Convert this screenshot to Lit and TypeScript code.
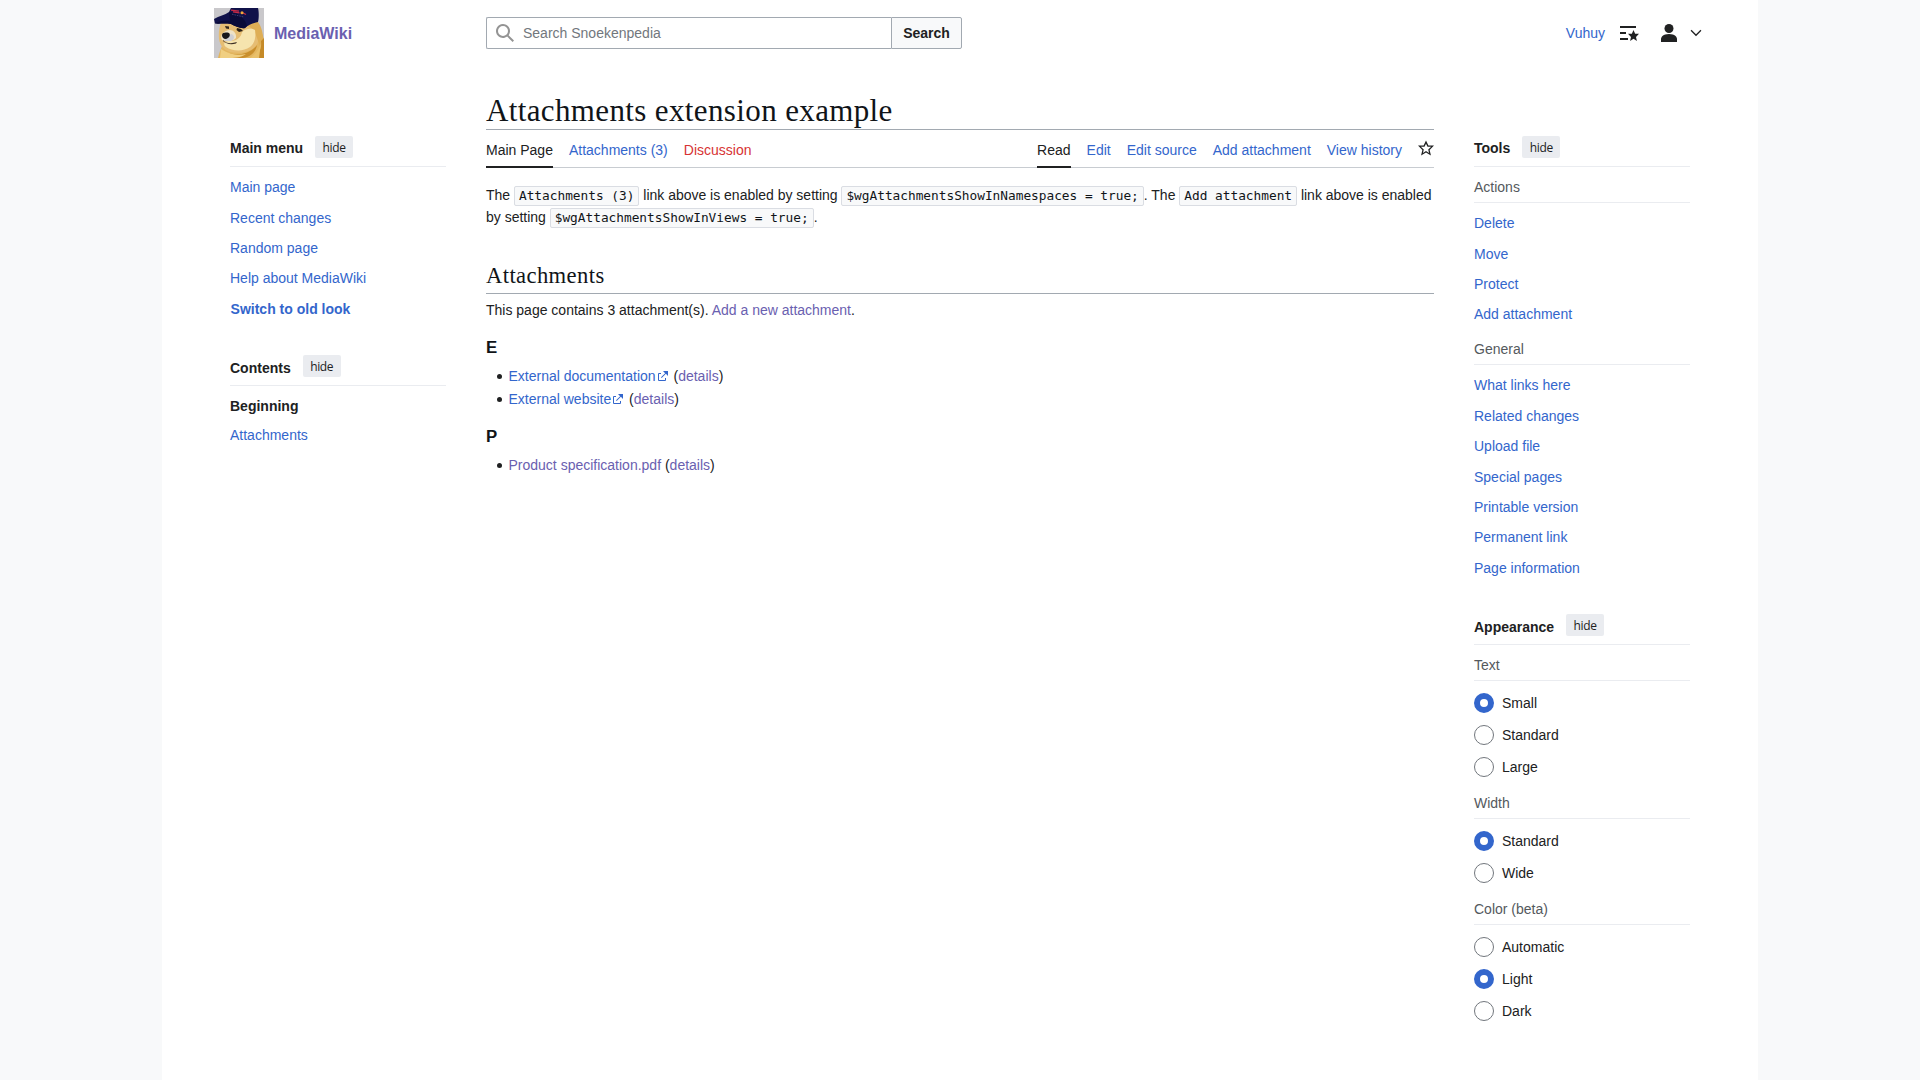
import { LitElement, html, css, svg } from "lit";
import { customElement, property } from "lit/decorators.js";
import { classMap } from "lit/directives/class-map.js";

const base = css`
  * { box-sizing: border-box; }
  a { color: #3366cc; text-decoration: none; }
  a.visited { color: #6a60b0; }
  a.missing { color: #d73333; }
  svg { display: block; flex: none; }
`;

const icon = (size: number, box: number, body: unknown, cls = "") => html`
  <svg class=${cls} width=${size} height=${size} viewBox="0 0 ${box} ${box}" fill="currentColor">${body}</svg>`;

const ICONS = {
  search: svg`<path d="M12.2 13.6a7 7 0 1 1 1.4-1.4l5.4 5.4-1.4 1.4zM3 8a5 5 0 1 0 10 0A5 5 0 0 0 3 8"/>`,
  watchlist: svg`<path d="M1 3h16v2H1zm0 6h6v2H1zm0 6h8v2H1zm8-4.24h3.85L14.5 7l1.65 3.76H20l-3 3.17.9 4.05-3.4-2.14L11.1 18l.9-4.05z"/>`,
  user: svg`<path d="M10 11c-5.92 0-8 3-8 5v3h16v-3c0-2-2.08-5-8-5"/><circle cx="10" cy="5.5" r="4.5"/>`,
  expand: svg`<path d="m17.5 4.75-7.5 7.5-7.5-7.5L1 6.25l9 9 9-9z"/>`,
  star: svg`<path d="M20 7h-7L10 .5 7 7H0l5.46 5.47-1.64 7 6.18-3.7 6.18 3.73-1.63-7zm-10 6.9-3.76 2.27 1-4.28L3.5 8.5h4.61L10 4.6l1.9 3.9h4.6l-3.73 3.4 1 4.28z"/>`,
  external: svg`<path d="M6 1h5v5L8.86 3.85 4.7 8 4 7.3l4.15-4.16zM2 3h2v1H2v6h6V8h1v2a1 1 0 0 1-1 1H2a1 1 0 0 1-1-1V4a1 1 0 0 1 1-1"/>`,
};

@customElement("site-logo")
class SiteLogo extends LitElement {
  static styles = css`:host { display: block; width: 50px; height: 50px; } svg { display: block; }`;
  render() {
    return html`
      <svg width="50" height="50" viewBox="0 0 50 50">
        <rect width="50" height="50" fill="#c9c8cb"/>
        <path d="M4 50C5 45 7 40 9 36L40 16C45 19 49 26 50 33V50Z" fill="#e3b660"/>
        <path d="M7 15C5 20 4.500 25 5 31C6 37 9 42 16 44C26 46 37 44 42 38C47 31 46 18 42 13Z" fill="#e6bd73"/>
        <path d="M33 17C36 13 41 12 44 14C48 19 49 27 50 34L46 38L40 22Z" fill="#deae55"/>
        <path d="M28 24C32 20 38 20 41 22C42 29 41 35 36 39C29 44 18 43 12 39C8 36 11 32 18 33C24 32 27 29 28 24Z" fill="#f6e4ae"/>
        <path d="M12 23C17 20 23 24 22 30C20 33 13 34 8 32C6 28 8 25 12 23Z" fill="#eee2c6"/>
        <path d="M17 26C21 27 21 31 17 33H10L13 29Z" fill="#cfcfd3"/>
        <path d="M8 27C8 24.500 12 24 15 25C17 27 15 30 12 31C9 31 8 29 8 27Z" fill="#17161a"/>
        <path d="M9 32C12 35.500 17 36 23 34L22 35.500C17 37 12 36 9 33Z" fill="#3e3025"/>
        <path d="M11 18L15 18.500L15 21L12 20.500Z" fill="#33271c"/>
        <path d="M23 20L27 21L29 23L25 24L22.500 22Z" fill="#2a2117"/>
        <path d="M15 45C23 48 36 46 43 37C42 43 38 49 29 50H18Z" fill="#c98f2d"/>
        <path d="M7 41C14 46 25 48 32 46C27 50 20 50 13 50H6Z" fill="#f0cf82"/>
        <path d="M47 33L50 30V50H41C45 45 48 40 47 33Z" fill="#c58a28"/>
        <path d="M36 50C42 46 45 41 47 35L45 50Z" fill="#e9c06a"/>
        <path d="M0 11C5 8 11 7 15 4L17 0H44C45 4 45 10 44 14C38 15 34 17 31 20C27 21 21 18 17 16C11 15 5 16 1 15.500Z" fill="#10124a"/>
        <path d="M15 4C22 4 31 9 33 18L31 20C27 21 21 18 17 16C11 15 5 16 1 15.500C5 13 12 12 16 13Z" fill="#0a0b38"/>
        <path d="M17 2.200L25 3.200M19 3.800L25.500 4.800M28 4.500L32 6.500" stroke="#c62a45" stroke-width="1.300" fill="none"/>
        <circle cx="28" cy="4.800" r="1.500" fill="#f0a93a"/>
        <path d="M18 6.200L30 9" stroke="#4a4d80" stroke-width=".8" stroke-dasharray="1.500 1"/>
      </svg>`;
  }
}

@customElement("page-header")
class PageHeader extends LitElement {
  static styles = [base, css`
    :host { display: grid; grid-template-columns: 272px 476px 1fr; height: 66px; padding: 0 56px 0 52px; }
    .brand { display: flex; align-items: center; gap: 10px; height: 66px; }
    .brand a { font-size: 16px; font-weight: bold; line-height: 22px; padding-top: 2px; }
    .search { display: flex; height: 32px; margin-top: 17px; color: #72777d; }
    .field { flex: 1; display: flex; align-items: center; gap: 8px; border: 1px solid #a2a9b1; border-right: 0; border-radius: 2px 0 0 2px; padding-left: 8px; line-height: 20px; }
    .glass { color: #949494; }
    .go { width: 71px; font: bold 14px/30px "Liberation Sans", Arial, sans-serif; color: #202122; background: #f8f9fa; border: 1px solid #a2a9b1; border-radius: 0 2px 2px 0; padding: 0; }
    .user { display: flex; align-items: center; justify-content: flex-end; color: #202122; height: 66px; }
    .user a { line-height: 22px; margin-right: 14px; }
    .person { margin-left: 20px; margin-right: 11px; }
  `];
  render() {
    return html`
      <div class="brand"><site-logo></site-logo><a class="visited">MediaWiki</a></div>
      <div class="search">
        <div class="field">${icon(20, 20, ICONS.search, "glass")}<span>Search Snoekenpedia</span></div>
        <button class="go">Search</button>
      </div>
      <div class="user">
        <a>Vuhuy</a>${icon(20, 20, ICONS.watchlist)}${icon(20, 20, ICONS.user, "person")}${icon(12, 20, ICONS.expand)}
      </div>`;
  }
}

@customElement("side-panel")
class SidePanel extends LitElement {
  static styles = [base, css`
    :host { display: block; }
    .head { display: flex; align-items: flex-start; gap: 12px; height: 36px; padding-top: 5px; border-bottom: 1px solid #eaecf0; }
    .title { font-weight: bold; line-height: 22px; padding-top: 1px; color: #202122; }
    .head.low .title { padding-top: 2px; }
    .hide { width: 38px; height: 22px; padding: 2px 0 0; border: 0; border-radius: 2px; background: #eaecf0; color: #202122; font: 12px/20px "Open Sans", "Noto Sans", sans-serif; letter-spacing: -0.35px; }
  `];
  @property() heading = "";
  @property({ type: Boolean }) low = false;
  render() {
    return html`
      <div class=${classMap({ head: true, low: this.low })}>
        <span class="title">${this.heading}</span><button class="hide">hide</button>
      </div>
      <slot></slot>`;
  }
}

@customElement("article-view")
class ArticleView extends LitElement {
  static styles = [base, css`
    :host { display: block; padding-top: 24px; line-height: 22px; }
    h1, h2 { font-family: "Liberation Serif", "Times New Roman", serif; font-weight: normal; margin: 0; color: #101418; border-bottom: 1px solid #a2a9b1; white-space: nowrap; }
    h1 { font-size: 31px; line-height: 41px; height: 40px; letter-spacing: 0.37px; }
    h2 { font-size: 22.6px; line-height: 32px; height: 34px; margin-top: 32px; letter-spacing: 0.4px; }
    h3 { font-size: 16.8px; line-height: 27px; margin: 13px 0 4.4px; color: #101418; }
    .tabs { display: flex; gap: 16px; height: 38px; box-shadow: inset 0 -1px #c8ccd1; }
    .tab { padding-top: 9px; white-space: nowrap; }
    .tab.active { color: #202122; border-bottom: 2px solid #202122; }
    .spacer { flex: 1; }
    .watch { color: #202122; padding-top: 10px; }
    .intro { margin: 16px 0 0; letter-spacing: -0.01px; }
    .note { margin: 5px 0 0; }
    code { font-family: "DejaVu Sans Mono", monospace; font-size: 12.8px; line-height: 18px; padding: 1px 4px 2px; border: 1px solid #dadde3; border-radius: 2px; background: #f8f9fa; color: #101418; }
    ul { list-style: none; margin: 0; padding: 0; }
    li { display: flex; align-items: flex-start; height: 22.6px; white-space: pre; }
    li::before { content: ""; width: 5px; height: 5px; border-radius: 50%; background: #202122; margin: 9px 7px 0 10.5px; flex: none; }
    .ext { color: #3366cc; margin: 4.600px 1px 0 1px; }
    ul + h3 { margin: 12.8px 0 3.6px; }
  `];
  render() {
    return html`
      <h1>Attachments extension example</h1>
      <nav class="tabs">
        <a class="tab active">Main Page</a><a class="tab">Attachments (3)</a><a class="tab missing">Discussion</a>
        <span class="spacer"></span>
        <a class="tab active">Read</a><a class="tab">Edit</a><a class="tab">Edit source</a><a class="tab">Add attachment</a><a class="tab">View history</a>
        <span class="watch">${icon(16, 20, ICONS.star)}</span>
      </nav>
      <p class="intro">The <code>Attachments (3)</code> link above is enabled by setting <code>$wgAttachmentsShowInNamespaces = true;</code>. The <code>Add attachment</code> link above is enabled by setting <code>$wgAttachmentsShowInViews = true;</code>.</p>
      <h2>Attachments</h2>
      <p class="note">This page contains 3 attachment(s). <a class="visited">Add a new attachment</a>.</p>
      <h3>E</h3>
      <ul>
        <li><a>External documentation</a>${icon(12, 12, ICONS.external, "ext")}<span> (<a class="visited">details</a>)</span></li>
        <li><a>External website</a>${icon(12, 12, ICONS.external, "ext")}<span> (<a class="visited">details</a>)</span></li>
      </ul>
      <h3>P</h3>
      <ul>
        <li><a class="visited">Product specification.pdf</a><span> (<a class="visited">details</a>)</span></li>
      </ul>`;
  }
}

@customElement("app-root")
class AppRoot extends LitElement {
  static styles = [base, css`
    :host { display: block; height: 1080px; overflow: hidden; background: #f8f9fa; font: 14px/22px "Liberation Sans", Arial, sans-serif; color: #202122; }
    .page { width: 1596px; height: 100%; margin: 0 auto; background: #fff; }
    .columns { display: grid; grid-template-columns: 216px 948px 216px; gap: 40px; padding-left: 68px; }
    .side { padding-top: 65px; }
    .links { padding-top: 5.2px; }
    .links a { display: block; height: 30.4px; line-height: 30.4px; }
    .links .strong { font-weight: bold; padding-left: 0.6px; }
    .menu { margin-bottom: -0.2px; }
    .actions { margin-bottom: -0.8px; }
    .general { padding-top: 5.4px; }
    .toc { padding-top: 6px; }
    .toc a { display: block; height: 29px; line-height: 28px; }
    .toc .current { color: #202122; font-weight: bold; }
    .contents { margin-top: 26px; }
    .appearance { margin-top: 25.8px; }
    .sub { height: 36px; padding-top: 9px; border-bottom: 1px solid #eaecf0; color: #54595d; }
    .radios { display: grid; gap: 12px; padding: 12px 0 6px; }
    .radio { display: flex; gap: 8px; line-height: 20px; }
    .dot { width: 20px; height: 20px; border: 1px solid #72777d; border-radius: 50%; background: #fff; }
    .dot.on { border: 6px solid #3366cc; }
  `];
  private links(items: string[], cls = "") {
    return html`<nav class="links ${cls}">${items.map((t) => html`<a>${t}</a>`)}</nav>`;
  }
  private radios(title: string, items: string[], selected: string) {
    return html`
      <div class="sub">${title}</div>
      <div class="radios">${items.map((t) => html`
        <label class="radio"><span class=${classMap({ dot: true, on: t === selected })}></span>${t}</label>`)}
      </div>`;
  }
  render() {
    return html`
      <div class="page">
        <page-header></page-header>
        <div class="columns">
          <div class="side">
            <side-panel heading="Main menu">
              <nav class="links menu">
                ${["Main page", "Recent changes", "Random page", "Help about MediaWiki"].map((t) => html`<a>${t}</a>`)}
                <a class="strong">Switch to old look</a>
              </nav>
            </side-panel>
            <side-panel class="contents" heading="Contents" low>
              <nav class="toc"><a class="current">Beginning</a><a>Attachments</a></nav>
            </side-panel>
          </div>
          <article-view></article-view>
          <div class="side">
            <side-panel heading="Tools">
              <div class="sub">Actions</div>
              ${this.links(["Delete", "Move", "Protect", "Add attachment"], "actions")}
              <div class="sub">General</div>
              ${this.links(["What links here", "Related changes", "Upload file", "Special pages", "Printable version", "Permanent link", "Page information"], "general")}
            </side-panel>
            <side-panel class="appearance" heading="Appearance" low>
              ${this.radios("Text", ["Small", "Standard", "Large"], "Small")}
              ${this.radios("Width", ["Standard", "Wide"], "Standard")}
              ${this.radios("Color (beta)", ["Automatic", "Light", "Dark"], "Light")}
            </side-panel>
          </div>
        </div>
      </div>`;
  }
}
